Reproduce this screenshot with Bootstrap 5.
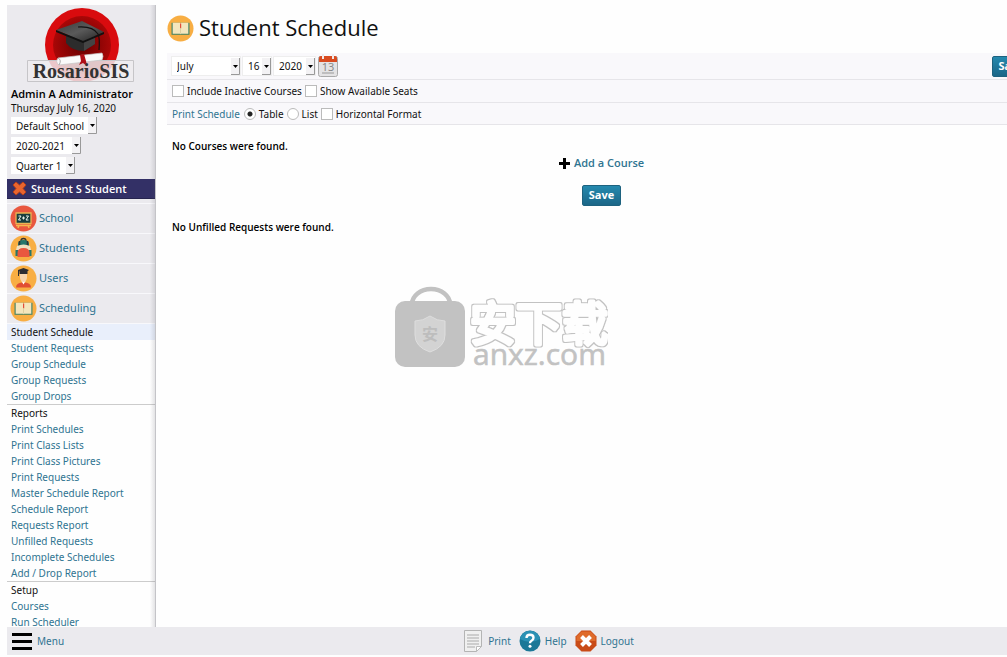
<!DOCTYPE html>
<html lang="en">
<head>
<meta charset="utf-8">
<meta name="viewport" content="width=device-width, initial-scale=1">
<title>Student Schedule</title>
<link href="https://cdn.jsdelivr.net/npm/bootstrap@5.3.0/dist/css/bootstrap.min.css" rel="stylesheet">
<script src="https://cdn.jsdelivr.net/npm/bootstrap@5.3.0/dist/js/bootstrap.bundle.min.js" defer></script>
<style>
body{font-family:"Noto Sans","Open Sans",sans-serif;font-size:11px;line-height:16px;color:#111;background:#fefefe;padding:5px 0 2px 7px}
a{color:#2f7491;text-decoration:none}
a:hover{text-decoration:underline}
.side{width:149px;border-right:1px solid #c4c4c8;position:relative}
.side::after{content:"";position:absolute;inset:0 0 0 auto;width:5px;background:linear-gradient(90deg,transparent,rgba(90,90,100,.16));pointer-events:none}
.side-head{background:#ebeaee;padding:0 4px;height:174px}
.logo{width:110px;height:81px;margin-left:14px}
.brand-text{font-family:"Liberation Serif",serif}
.who,.student,.save,.msg,.add,.page-title{font-family:"Open Sans","Noto Sans",sans-serif}
.who,.student,.msg,.add{font-weight:600}
.who,.msg{color:#000}
.who{font-size:11px;line-height:15px}
.date-line{font-size:10px;line-height:14px}
.picks{gap:3px;padding-top:2px}
.pick{appearance:none;border:0;border-radius:0;color:#111;font-size:10px;line-height:16px;height:17px;padding:0 10px 0 5px;background:#fff url("data:image/svg+xml,%3Csvg xmlns='http://www.w3.org/2000/svg' width='9' height='17'%3E%3Cpath fill='%23f3f2f4' d='M0 0h9v17H0z'/%3E%3Cpath d='M8.500 0v16.500H0' fill='none' stroke='%23999'/%3E%3Cpath d='M2 7h5L4.500 10z'/%3E%3C/svg%3E") right center no-repeat}
.tool .pick{height:18px;box-shadow:0 0 0 1px #eee}
.w-school{width:86px}.w-year{width:70px}.w-quarter{width:64px}
.w-month{width:68px}.w-day{width:28px}.w-yr{width:41px}
.student{background:#333066;color:#fff;height:20px;padding-left:5px;border-bottom:1px solid #26244f;font-size:11px}
.student svg{width:15px;height:15px}
.mods{background:#ebeaee;padding-top:4px}
.mod{height:30px;padding-left:3px;gap:2px;border-top:1px solid #f8f8fb;font-size:11px}
.mod span{padding-bottom:2px}
.ico{width:27px;height:27px;flex:none}
.sub{background:#fefefe;font-size:10px;border-top:1px solid #f8f8fb}
.sub>*{display:block;padding-left:4px;height:16px;line-height:16px;white-space:nowrap}
.sub .here{background:#e9effb;color:#111}
.sub .group{height:17px;border-top:1px solid #ccc;color:#111}
.pane{padding:5px 0 0 11px}
.wide{margin-right:-29px}
.page-title{font-size:22px;line-height:24px;font-weight:400}
.title-row{height:35px;gap:5px;padding-top:5px}
.tool{background:#f9f8fb;border-bottom:1px solid #e6e5e9;padding:0 5px;font-size:10px}
.r1{height:27px;gap:3px;margin-top:8px}.r2{height:23px}.r3{height:22px}
.tick{appearance:none;width:12px;height:12px;margin:0;border:1px solid #bbb;background:#fff;flex:none}
.tick[type=radio]{border-radius:50%}
.tick:checked{background:radial-gradient(circle,#222 0 2px,#fff 3px)}
.lbl{margin:0 3px}
.save{border:1px solid #1d627f;border-radius:2px;background:linear-gradient(#2589ae,#1b6687);color:#fff;font-size:11px;line-height:16px;font-weight:700;padding:1px 6px 2px;height:21px}
.msg{font-size:10px;line-height:16px;padding-left:5px}
.first{padding-top:13px}
.add{padding-top:1px}
.foot{height:28px;background:#ebeaee;font-size:10px}
.menu{width:82px;padding-left:4px}
.foot .ico{width:22px;height:22px}
.foot a{gap:4px}
.tools{gap:8px}
.wm{position:absolute;inset:1px 5px 4px 0;pointer-events:none}
.wm svg{width:214px;height:82px}
</style>
</head>
<body class="vh-100 d-flex flex-column overflow-hidden position-relative">
<svg width="0" height="0" class="position-absolute" aria-hidden="true">
  <symbol id="book" viewBox="0 0 27 27"><circle cx="13.500" cy="13.500" r="13" fill="#f8ae43"/><path d="M4.500 7.800h18v12h-18z" fill="#478568"/><path d="M5.700 7.800H13l.5.500.5-.5h7.300v11H14l-.5.500-.5-.5H5.700z" fill="#f4e6bd"/><path d="M13.500 8.500v10" stroke="#d9c998" stroke-width=".8"/><path d="M13 8.500h1.200v5l-.6-.7-.6.700z" fill="#e34c38"/></symbol>
</svg>
<div class="d-flex flex-fill overflow-hidden">
  <nav class="side flex-shrink-0 overflow-hidden" aria-label="Modules">
    <div class="side-head">
      <svg class="logo d-block" viewBox="0 0 110 81" role="img" aria-label="RosarioSIS">
        <defs><linearGradient id="cap" x2="1" y2="1"><stop stop-color="#3a3a3a"/><stop offset=".5" stop-color="#5a5a5a"/><stop offset="1" stop-color="#222"/></linearGradient><radialGradient id="disc"><stop stop-color="#650000"/><stop offset="1" stop-color="#a90707"/></radialGradient></defs>
        <circle cx="57" cy="40" r="37" fill="#d90b0e"/><circle cx="57" cy="40" r="29" fill="url(#disc)"/>
        <path d="M41 30v8q6 8 18 8l11-7V27z" fill="#2c2c2c"/><path d="m59 34 11-6v11l-11 7z" fill="#444"/><path d="m31 25 26-9 22 11-21 9z" fill="url(#cap)"/><path d="m31 25 27 11 21-9v2L58 38 31 27z" fill="#111"/>
        <path d="M53 22q15-1 20 7 2 4 1 16" fill="none" stroke="#111" stroke-width="1.200"/>
        <path d="M2.500 55.500h106v21H2.500z" fill="#eeecee" fill-opacity=".84" stroke="#c6c5c8"/><path d="m33 53 44-5q2 3 0 7l-43 5q-4-3-1-7z" fill="#fafafa" stroke="#c6c6c6" stroke-width=".7"/><path d="m33 53q4 2 1 7" fill="none" stroke="#aaa"/><path d="m55 50 4-1 2 7 1 5-4-3-4 2 2-4z" fill="#b00e16"/>
        <text class="brand-text" x="56" y="73" text-anchor="middle" font-size="20" font-weight="700" fill="#333">RosarioSIS</text>
      </svg>
      <div class="who text-nowrap">Admin A Administrator</div>
      <div class="date-line">Thursday July 16, 2020</div>
      <div class="picks d-flex flex-column align-items-start">
        <select class="pick w-school" aria-label="School"><option>Default School</option></select>
        <select class="pick w-year" aria-label="School year"><option>2020-2021</option></select>
        <select class="pick w-quarter" aria-label="Marking period"><option>Quarter 1</option></select>
      </div>
    </div>
    <div class="student d-flex align-items-center gap-1">
      <svg viewBox="0 0 15 15" aria-hidden="true"><path d="m4 1 3.500 3L11 1l3 3-3 3.500 3 3.500-3 3-3.500-3L4 14l-3-3 3-3.500L1 4z" fill="#e8652f" stroke="#b9401a"/></svg>
      <span>Student S Student</span>
    </div>
    <div class="mods">
      <a class="mod d-flex align-items-center" href="#"><svg class="ico" viewBox="0 0 27 27" aria-hidden="true"><circle cx="13.500" cy="13.500" r="13" fill="#e9573f"/><path d="m9 20-1 3m10-3 1 3M6 20.500h15" stroke="#f5b84c" stroke-width="1.500"/><path d="M6 8h15v10.500H6z" fill="#183e3e" stroke="#e9b453" stroke-width="1.300"/><path d="M8.500 11h2.500l-2.500 4H11m5-4h2.500l-2.500 4h2.500M12 13h3m-1.500-1.500v3" stroke="#e9f2eb" fill="none"/></svg><span>School</span></a>
      <a class="mod d-flex align-items-center" href="#"><svg class="ico" viewBox="0 0 27 27" aria-hidden="true"><circle cx="13.500" cy="13.500" r="13" fill="#f8ae43"/><path d="M11 6q0-2.500 2.500-2.500T16 6" fill="none" stroke="#333" stroke-width="1.300"/><path d="M8 14V9q0-4 5.500-4T19 9v5z" fill="#26766b"/><path d="M9.500 6v6m8-6v6" stroke="#333" stroke-width="1.500"/><path d="M7 11q6.500-3 13 0l1 4H6z" fill="#efe1c1"/><path d="M5.500 15h3v6h-3zm13 0h3v6h-3z" fill="#26766b"/><path d="M7.500 22v-4q0-5 6-5t6 5v4z" fill="#e9573f"/></svg><span>Students</span></a>
      <a class="mod d-flex align-items-center" href="#"><svg class="ico" viewBox="0 0 27 27" aria-hidden="true"><circle cx="13.500" cy="13.500" r="13" fill="#f8ae43"/><path d="M6 22.500q0-5 7.500-5t7.500 5z" fill="#e14e32"/><path d="m11.500 16 2 3.500 2-3.500z" fill="#fff"/><path d="M10 8h7v5q-.8 4-3.500 4T10 13z" fill="#f7d5ad"/><path d="m8 5 5.500-2L19 5l-1.500 1.200V9h-8V6.500z" fill="#2c2d32"/><path d="M8.500 5v6" stroke="#2c2d32"/></svg><span>Users</span></a>
      <a class="mod d-flex align-items-center" href="#"><svg class="ico" aria-hidden="true"><use href="#book"/></svg><span>Scheduling</span></a>
    </div>
    <div class="sub">
      <a class="here" href="#" aria-current="page">Student Schedule</a>
      <a href="#">Student Requests</a>
      <a href="#">Group Schedule</a>
      <a href="#">Group Requests</a>
      <a href="#">Group Drops</a>
      <div class="group">Reports</div>
      <a href="#">Print Schedules</a>
      <a href="#">Print Class Lists</a>
      <a href="#">Print Class Pictures</a>
      <a href="#">Print Requests</a>
      <a href="#">Master Schedule Report</a>
      <a href="#">Schedule Report</a>
      <a href="#">Requests Report</a>
      <a href="#">Unfilled Requests</a>
      <a href="#">Incomplete Schedules</a>
      <a href="#">Add / Drop Report</a>
      <div class="group">Setup</div>
      <a href="#">Courses</a>
      <a href="#">Run Scheduler</a>
    </div>
  </nav>
  <main class="pane flex-fill overflow-hidden">
    <div class="wide">
      <div class="title-row d-flex align-items-start"><svg class="ico" aria-hidden="true"><use href="#book"/></svg><h1 class="page-title m-0">Student Schedule</h1></div>
      <div class="tool r1 d-flex align-items-center">
        <select class="pick w-month" aria-label="Month"><option>July</option></select>
        <select class="pick w-day" aria-label="Day"><option>16</option></select>
        <select class="pick w-yr" aria-label="Year"><option>2020</option></select>
        <button class="btn p-0 border-0 lh-1" aria-label="Choose date"><svg class="d-block" width="20" height="25" viewBox="0 0 20 25"><rect x=".5" y="2.500" width="19" height="20" rx="2" fill="#e4e3e4" stroke="#aaa"/><path d="M1 4q0-2 2-2h14q2 0 2 2v4H1z" fill="#d94b20"/><path d="M5 0v5m10-5v5" stroke="#efeaea" stroke-width="2"/><path d="M4 19h12" stroke="#999"/><text x="10" y="17" text-anchor="middle" font-size="11" fill="#888">13</text></svg></button>
        <button class="save ms-auto">Save</button>
      </div>
      <div class="tool r2 d-flex align-items-center">
        <input class="tick" type="checkbox" id="inactive"><label class="lbl" for="inactive">Include Inactive Courses</label>
        <input class="tick" type="checkbox" id="seats"><label class="lbl" for="seats">Show Available Seats</label>
      </div>
      <div class="tool r3 d-flex align-items-center">
        <a class="me-1" href="#">Print Schedule</a>
        <input class="tick" type="radio" name="fmt" id="table" checked><label class="lbl" for="table">Table</label>
        <input class="tick" type="radio" name="fmt" id="list"><label class="lbl" for="list">List</label>
        <input class="tick" type="checkbox" id="horiz"><label class="lbl" for="horiz">Horizontal Format</label>
      </div>
      <p class="msg first m-0">No Courses were found.</p>
      <div class="add text-center"><a class="d-inline-flex align-items-center gap-1" href="#"><svg width="11" height="11" viewBox="0 0 11 11" aria-hidden="true"><path d="M5.500 0v11M0 5.500h11" stroke="#000" stroke-width="3"/></svg>Add a Course</a></div>
      <div class="text-center mt-2 pt-1"><button class="save">Save</button></div>
      <p class="msg first m-0">No Unfilled Requests were found.</p>
    </div>
  </main>
</div>
<footer class="foot flex-shrink-0 d-flex align-items-center">
  <a class="menu d-flex align-items-center" href="#"><svg width="22" height="20" viewBox="0 0 22 20" aria-hidden="true"><path d="M1 3.500h20M1 10.500h20M1 17.500h20" stroke="#000" stroke-width="3"/></svg><span>Menu</span></a>
  <div class="tools d-flex flex-fill justify-content-center">
    <a class="d-flex align-items-center" href="#"><svg class="ico" viewBox="0 0 22 22" aria-hidden="true"><path d="M2.500.5h17v16l-5 5h-12z" fill="#f0f0f0" stroke="#b4b4b4"/><path d="M5 5h12M5 8h12M5 11h12M5 14h12M5 17h8" stroke="#aaa"/><path d="m19.500 16.500-5 5v-5z" fill="#fff" stroke="#bbb"/></svg><span>Print</span></a>
    <a class="d-flex align-items-center" href="#"><svg class="ico" viewBox="0 0 22 22" aria-hidden="true"><circle cx="11" cy="11" r="10.500" fill="#1c7897"/><path d="M1 9Q11 15 21 9A10.200 10.200 0 0 0 1 9z" fill="#2b91b4"/><path d="M7.500 8q0-3.200 3.500-3.200t3.500 3q0 1.900-2 2.900-1.500.8-1.500 2.600" fill="none" stroke="#fff" stroke-width="2.400"/><circle cx="11" cy="16.300" r="1.500" fill="#fff"/></svg><span>Help</span></a>
    <a class="d-flex align-items-center" href="#"><svg class="ico" viewBox="0 0 22 22" aria-hidden="true"><path d="M6.500.5h9l6 6v9l-6 6h-9l-6-6v-9z" fill="#c94b17"/><path d="M6.500 1.500h9l5 5V11H1.500V6.500z" fill="#df6b2b"/><path d="m6.500 6.500 9 9m0-9-9 9" stroke="#fff" stroke-width="4"/></svg><span>Logout</span></a>
  </div>
</footer>
<div class="wm d-flex align-items-center justify-content-center">
  <svg viewBox="0 0 214 82" role="img" aria-label="anxz.com">
    <defs><filter id="rim" x="-5%" y="-10%" width="110%" height="120%"><feMorphology in="SourceAlpha" operator="dilate" radius="1" result="d"/><feFlood flood-color="#c2c2c2"/><feComposite in2="d" operator="in" result="g"/><feMerge><feMergeNode in="g"/><feMergeNode in="SourceGraphic"/></feMerge></filter></defs>
    <path d="M18 18a19 15 0 0 1 38 0" fill="none" stroke="#c2c2c2" stroke-width="4.500"/>
    <rect x="1" y="15" width="70" height="66" rx="10" fill="#c2c2c2"/>
    <path d="M36 30q7 5 15 5v14q0 12-15 17-15-5-15-17V35q8 0 15-5z" fill="#d3d3d3" stroke="#dedede"/>
    <text x="36" y="54" text-anchor="middle" font-family="'Noto Sans CJK SC',sans-serif" font-size="16" font-weight="700" fill="#bdbdbd">安</text>
    <text x="76" y="54" font-family="'Noto Sans CJK SC',sans-serif" font-size="46" font-weight="400" fill="#fefefe" stroke="#fefefe" stroke-width="4" stroke-linejoin="round" filter="url(#rim)">安下载</text>
    <text x="79" y="79" font-family="'Open Sans',sans-serif" font-size="30" fill="#c2c2c2" stroke="#c2c2c2" stroke-width=".6">anxz.com</text>
  </svg>
</div>
</body>
</html>
